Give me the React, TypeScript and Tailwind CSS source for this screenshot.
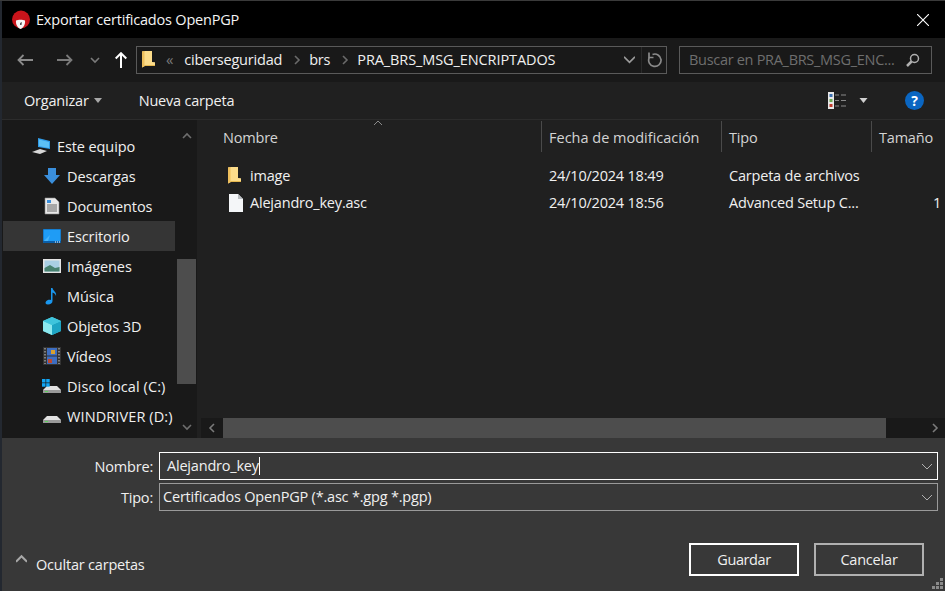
import React from "react";

const Folder = () => (
  <svg width="13" height="17" viewBox="0 0 13 17">
    <path d="M0 .5 3 0h7v11l3 .3V15H3l-3 1.500z" fill="#fcdc8a" />
    <path d="M0 .5 2.500 0v15L0 16.500z" fill="#eebf5c" />
    <path d="M2.500 15h10.500v-1H2.500z" fill="#e6b84f" />
  </svg>
);

const Chev = ({ d, c = "#8a8a8a", w = 10, sw = 1.6 }: { d: string; c?: string; w?: number; sw?: number }) => (
  <svg width={w} height={w} viewBox="0 0 10 10" fill="none" stroke={c} strokeWidth={sw}>
    <path d={d} />
  </svg>
);

const Arrow = ({ c, dir }: { c: string; dir: "l" | "r" | "u" }) =>
  dir === "u" ? (
    <svg width="12" height="16" viewBox="0 0 12 16" fill="none" stroke={c} strokeWidth="2">
      <path d="M6 16V1.500M.7 6.500 6 1.200l5.300 5.300" />
    </svg>
  ) : (
    <svg width="16" height="12" viewBox="0 0 16 12" fill="none" stroke={c} strokeWidth="1.800">
      {dir === "l" ? <path d="M16 6H1.500M6.500 1 1.500 6l5 5" /> : <path d="M0 6h14.500M9.500 1l5 5-5 5" />}
    </svg>
  );

const PcIcon = () => (
  <svg width="20" height="18" viewBox="0 0 20 18">
    <path d="M6 1l12 3v8L6 10z" fill="#2f9be8" />
    <path d="M7 2.500l10 2.500v6L7 9z" fill="#5cc0f5" />
    <path d="M0 15l8-3 7 2-7 3z" fill="#d8d8d8" />
  </svg>
);
const DownIcon = () => (
  <svg width="18" height="18" viewBox="0 0 18 18">
    <path d="M5 1h8v7h4l-8 9-8-9h4z" fill="#3a8fdc" />
  </svg>
);
const DocIcon = () => (
  <svg width="16" height="18" viewBox="0 0 16 18">
    <path d="M1 1h10l4 4v12H1z" fill="#e8e8e8" stroke="#8a8a8a" strokeWidth="0.6" />
    <path d="M3 3h4v3H3z" fill="#3a8fdc" />
    <path d="M3 8h10M3 10h10M3 12h10M3 14h10" stroke="#666" strokeWidth="1" />
  </svg>
);
const DeskIcon = () => (
  <svg width="18" height="14" viewBox="0 0 18 14">
    <rect width="18" height="14" fill="#0a5ea8" />
    <rect x="0.500" y="0.500" width="17" height="11.500" fill="#1f9cf5" />
    <path d="M1 12 7 6l-2 6z" fill="#46b4fa" />
    <path d="M12 13h1M14 13h1M16 13h1" stroke="#fff" strokeWidth="1" />
  </svg>
);
const PicIcon = () => (
  <svg width="18" height="14" viewBox="0 0 18 14">
    <rect width="18" height="14" fill="#e4e4e4" />
    <rect x="1.500" y="1.500" width="15" height="11" fill="#a9cfe4" />
    <path d="M1.500 9 7 6l5 3 4.500-1v4.500h-15z" fill="#47816f" />
  </svg>
);
const MusicIcon = () => (
  <svg width="14" height="18" viewBox="0 0 14 18">
    <path d="M6 1h1.500c.5 3 4.500 4 3.500 8-.3-2-2-3-3.500-3.500V14c0 2-2 3.500-4.500 3.500S0 16 1 14.500 4 12.500 6 13z" fill="#1a97ee" />
  </svg>
);
const CubeIcon = () => (
  <svg width="18" height="18" viewBox="0 0 18 18">
    <path d="M9 0l9 4v10l-9 4-9-4V4z" fill="#4fd0e0" />
    <path d="M9 8l9-4v10l-9 4z" fill="#1ea5c4" />
    <path d="M0 4l9 4v10l-9-4z" fill="#8ce8ee" />
    <path d="M9 0l9 4-9 4-9-4z" fill="#3fc4dc" />
  </svg>
);
const VideoIcon = () => (
  <svg width="18" height="18" viewBox="0 0 18 18">
    <rect width="18" height="18" fill="#333" />
    <rect x="4" y="1" width="10" height="7.500" fill="#3e6ec0" />
    <rect x="4" y="9.500" width="10" height="7.500" fill="#3e6ec0" />
    <rect x="8" y="3" width="4" height="4" fill="#d8a02c" />
    <rect x="5" y="12" width="4" height="4" fill="#c0482c" />
    <path d="M2 1v16M16 1v16" stroke="#999" strokeWidth="1.500" strokeDasharray="1.500 1.500" />
  </svg>
);
const DriveIcon = ({ win }: { win?: boolean }) => (
  <svg width="20" height="18" viewBox="0 0 20 18">
    <path d="M1 13l4-4h10l4 4v2H1z" fill="#e2e2e2" />
    <path d="M1 13h18v3H1z" fill="#9a9a9a" />
    <rect x="3" y="14" width="3" height="1" fill="#5fd35f" />
    {win && (
      <g fill="#12a5f4">
        <rect x="0" y="2" width="3.500" height="3.500" />
        <rect x="4.200" y="2" width="3.500" height="3.500" />
        <rect x="0" y="6.200" width="3.500" height="3.500" />
        <rect x="4.200" y="6.200" width="3.500" height="3.500" />
      </g>
    )}
  </svg>
);

const nav: [React.ReactNode, string, string][] = [
  [<DownIcon />, "Descargas", ""],
  [<DocIcon />, "Documentos", ""],
  [<DeskIcon />, "Escritorio", ""],
  [<PicIcon />, "Imágenes", ""],
  [<MusicIcon />, "Música", ""],
  [<CubeIcon />, "Objetos 3D", ""],
  [<VideoIcon />, "Vídeos", ""],
  [<DriveIcon win />, "Disco local (C:)", "tracking-[0.1px]"],
  [<DriveIcon />, "WINDRIVER (D:)", "tracking-[0.1px]"],
];

const Cols = ({ cells, cls }: { cells: React.ReactNode[]; cls: string }) => (
  <div className={`flex pl-[22px] ${cls}`}>
    <div className="w-[318px] shrink-0 flex items-center">{cells[0]}</div>
    <div className="w-[180px] shrink-0 pl-[8px] whitespace-nowrap">{cells[1]}</div>
    <div className="w-[150px] shrink-0 pl-[8px] whitespace-nowrap">{cells[2]}</div>
    <div className="flex-1 pl-[8px] whitespace-nowrap overflow-hidden">{cells[3]}</div>
  </div>
);

export default function App() {
  return (
    <div className="w-[945px] h-[591px] overflow-hidden flex flex-col bg-[#232830] border-t border-[#3a3a3a] pl-[2px] text-[14.500px] text-[#f0f0f0] [font-family:'Open_Sans','Noto_Sans',sans-serif] tracking-[-0.2px]">
      {/* title bar */}
      <div className="h-[37px] shrink-0 flex items-center bg-black pl-[10px] pr-[16px]">
        <svg width="18" height="19" viewBox="0 0 18 19">
          <circle cx="9" cy="9.500" r="9" fill="#c9141b" />
          <path d="M4 10.500c2-1 7-1 9 0 .5 3.500-1.500 7.500-4.500 8.500C5.500 18 3.500 14 4 10.500z" fill="#f6f6f6" />
          <path d="M8 13l2-1-.5 3H8z" fill="#555" />
        </svg>
        <span className="ml-[6px] text-[14.500px] text-[#f4f4f4]">Exportar certificados OpenPGP</span>
        <svg className="ml-auto" width="12" height="12" viewBox="0 0 12 12" stroke="#fff" strokeWidth="1.100">
          <path d="M0 0l12 12M12 0 0 12" />
        </svg>
      </div>

      {/* nav bar */}
      <div className="h-[44px] shrink-0 flex items-center bg-[#191919]">
        <div className="w-[134px] shrink-0 flex items-center pl-[15px]">
          <Arrow c="#8a8a8a" dir="l" />
          <span className="ml-[24px] flex"><Arrow c="#7a7a7a" dir="r" /></span>
          <span className="ml-[17px] flex"><Chev d="M1 3l4 4 4-4" c="#7a7a7a" /></span>
          <span className="ml-[15px] flex"><Arrow c="#ffffff" dir="u" /></span>
        </div>
        <div className="w-[531px] h-[28px] shrink-0 border border-[#5a5a5a] flex items-center pl-[5px] mb-px">
          <Folder />
          <span className="ml-[11px] text-[#7a7a7a] text-[15px] leading-none">«</span>
          <span className="ml-[11px]">ciberseguridad</span>
          <span className="ml-[10px] flex"><Chev d="M3 1l4 4-4 4" c="#6a6a6a" /></span>
          <span className="ml-[7px]">brs</span>
          <span className="ml-[10px] flex"><Chev d="M3 1l4 4-4 4" c="#6a6a6a" /></span>
          <span className="ml-[7px] tracking-[-0.1px]">PRA_BRS_MSG_ENCRIPTADOS</span>
          <span className="ml-auto flex items-center h-full">
            <Chev d="M0 2.500l5 5 5-5" c="#9a9a9a" w={11} />
            <span className="ml-[6px] w-px h-full bg-[#2a2a2a]" />
            <svg className="ml-[5px] mr-[3px]" width="16" height="16" viewBox="0 0 16 16" fill="none" stroke="#8a8a8a" strokeWidth="1.700">
              <path d="M5.500 2.500A6.200 6.200 0 1 1 2.300 5.500" />
              <path d="M2 .5v5h4.500" />
            </svg>
          </span>
        </div>
        <div className="w-[253px] h-[28px] ml-[12px] shrink-0 border border-[#5a5a5a] flex items-center pl-[9px] pr-[11px] mb-px text-[#6e6e6e]">
          <span className="tracking-[-0.3px] whitespace-nowrap">Buscar en PRA_BRS_MSG_ENC...</span>
          <svg className="ml-auto" width="14" height="14" viewBox="0 0 14 14" fill="none" stroke="#b0b0b0">
            <circle cx="8.500" cy="5.500" r="4" strokeWidth="1.500" />
            <path d="M5.500 8.500 1 13" strokeWidth="2.500" />
          </svg>
        </div>
      </div>

      {/* toolbar */}
      <div className="h-[38px] shrink-0 flex items-center bg-[#202020] border-b border-[#2c2c2c] pl-[22px] pr-[21px]">
        <span>Organizar</span>
        <svg className="ml-[5px]" width="8" height="5" viewBox="0 0 8 5"><path d="M0 0h8L4 5z" fill="#a8a8a8" /></svg>
        <span className="ml-[37px]">Nueva carpeta</span>
        <svg className="ml-auto" width="19" height="17" viewBox="0 0 19 17">
          <rect x="0" y="0" width="6" height="17" fill="#e8e8e8" />
          <rect x="1.500" y="2" width="3" height="3" fill="#3a6fb0" />
          <rect x="1.500" y="7" width="3" height="3" fill="#6aa84f" />
          <rect x="1.500" y="12" width="3" height="3" fill="#c0392b" />
          <path d="M7 3h4M13 3h5M7 8.500h4M13 8.500h5M7 14h4M13 14h5" stroke="#8a8a8a" />
        </svg>
        <svg className="ml-[12px]" width="9" height="5" viewBox="0 0 8 5"><path d="M0 0h8L4 5z" fill="#d0d0d0" /></svg>
        <span className="ml-[37px] w-[19px] h-[19px] rounded-full bg-[#0a66c2] flex items-center justify-center text-white font-bold text-[14px]">?</span>
      </div>

      {/* main */}
      <div className="h-[318px] shrink-0 flex bg-[#202020]">
        <div className="w-[195px] shrink-0 flex bg-[#191919]">
          <div className="w-[173px] shrink-0 pt-[11px] pl-px">
            <div className="h-[30px] flex items-center pl-[29px] tracking-[-0.1px]">
              <PcIcon />
              <span className="ml-[5px] mt-[2px]">Este equipo</span>
            </div>
            {nav.map(([icon, label, extra]) => (
              <div key={label} className={`h-[30px] flex items-center pl-[39px] tracking-[-0.1px] ${label === "Escritorio" ? "bg-[#353535]" : ""}`}>
                <span className="w-[20px] shrink-0 flex justify-center">{icon}</span>
                <span className={`ml-[5px] mt-[2px] whitespace-nowrap ${extra}`}>{label}</span>
              </div>
            ))}
          </div>
          <div className="ml-[2px] w-[19px] flex flex-col items-center">
            <div className="h-[21px] flex items-end"><Chev d="M1 7l4-4 4 4" c="#6e6e6e" /></div>
            <div className="mt-[118px] h-[125px] w-full bg-[#4d4d4d]" />
            <div className="mt-[38px] flex"><Chev d="M1 3l4 4 4-4" c="#6e6e6e" /></div>
          </div>
        </div>
        <div className="w-[4px] shrink-0 bg-[#202020]" />
        <div className="flex-1 min-w-0 flex flex-col overflow-hidden">
          <div className="relative">
            <div className="absolute left-[172px] -top-[1px] flex"><Chev d="M1 6l4-4 4 4" c="#8a8a8a" sw={1} /></div>
            <Cols
              cls="h-[36px] items-center text-[#d4d4d4]"
              cells={[
                <span>Nombre</span>,
                <span className="tracking-normal">Fecha de modificación</span>,
                <span>Tipo</span>,
                <span>Tamaño</span>,
              ]}
            />
            <div className="absolute left-[340px] top-[1px] h-[31px] w-px bg-[#4a4a4a]" />
            <div className="absolute left-[520px] top-[1px] h-[31px] w-px bg-[#4a4a4a]" />
            <div className="absolute left-[670px] top-[1px] h-[31px] w-px bg-[#4a4a4a]" />
          </div>
          <div className="pt-[6px] flex-1">
            <Cols
              cls="h-[27px] items-center"
              cells={[
                <><span className="ml-[5px] w-[16px] flex"><Folder /></span><span className="ml-[6px]">image</span></>,
                <span>24/10/2024 18:49</span>,
                <span>Carpeta de archivos</span>,
                <span></span>,
              ]}
            />
            <Cols
              cls="h-[27px] items-center"
              cells={[
                <>
                  <svg className="ml-[5px]" width="16" height="18" viewBox="0 0 16 18">
                    <path d="M1 0h9l5 5v13H1z" fill="#f4f6f8" />
                    <path d="M10 0v5h5z" fill="#b8bcc0" />
                  </svg>
                  <span className="ml-[6px]">Alejandro_key.asc</span>
                </>,
                <span>24/10/2024 18:56</span>,
                <span>Advanced Setup C...</span>,
                <span className="pl-[54px]">1</span>,
              ]}
            />
          </div>
          <div className="h-[20px] shrink-0 flex items-center bg-[#191919]">
            <div className="w-[22px] flex justify-center"><Chev d="M7 1 3 5l4 4" c="#7a7a7a" /></div>
            <div className="w-[663px] h-full bg-[#4d4d4d]" />
            <div className="flex-1 flex justify-end pr-[5px]"><Chev d="M3 1l4 4-4 4" c="#7a7a7a" /></div>
          </div>
        </div>
      </div>

      {/* footer */}
      <div className="flex-1 bg-[#383838] pt-[14px] relative">
        <div className="flex items-center h-[28px]">
          <span className="w-[152px] text-right pr-px mt-[2px]">Nombre:</span>
          <div className="ml-[5px] w-[779px] h-[28px] border border-white flex items-center pl-[7px] pr-[5px]">
            <span>Alejandro_key</span>
            <span className="w-px h-[18px] bg-white" />
            <span className="ml-auto flex"><Chev d="M0 3l5 5 5-5" c="#b0b0b0" sw={1} /></span>
          </div>
        </div>
        <div className="flex items-center h-[28px] mt-[3px]">
          <span className="w-[152px] text-right pr-px mt-[2px]">Tipo:</span>
          <div className="ml-[5px] w-[779px] h-[28px] border border-[#9a9a9a] flex items-center pl-[3px] pr-[5px]">
            <span>Certificados OpenPGP (*.asc *.gpg *.pgp)</span>
            <span className="ml-auto flex"><Chev d="M0 3l5 5 5-5" c="#b0b0b0" sw={1} /></span>
          </div>
        </div>
        <div className="flex items-center mt-[32px] pl-[14px] pr-[21px]">
          <Chev d="M0 7l5-5 5 5" c="#a8a8a8" w={11} sw={1.800} />
          <span className="ml-[9px] mt-[10px]">Ocultar carpetas</span>
          <div className="ml-auto w-[110px] h-[33px] border-2 border-white flex items-center justify-center tracking-[-0.4px]">Guardar</div>
          <div className="ml-[15px] w-[110px] h-[33px] border-2 border-[#b0b0b0] flex items-center justify-center">Cancelar</div>
        </div>
        <svg className="absolute right-[1px] bottom-[1px]" width="12" height="12" viewBox="0 0 12 12" fill="#8a8a8a">
          <rect x="8" y="0" width="3" height="3" />
          <rect x="4" y="4" width="3" height="3" />
          <rect x="8" y="4" width="3" height="3" />
          <rect x="0" y="8" width="3" height="3" />
          <rect x="4" y="8" width="3" height="3" />
          <rect x="8" y="8" width="3" height="3" />
        </svg>
      </div>
    </div>
  );
}
